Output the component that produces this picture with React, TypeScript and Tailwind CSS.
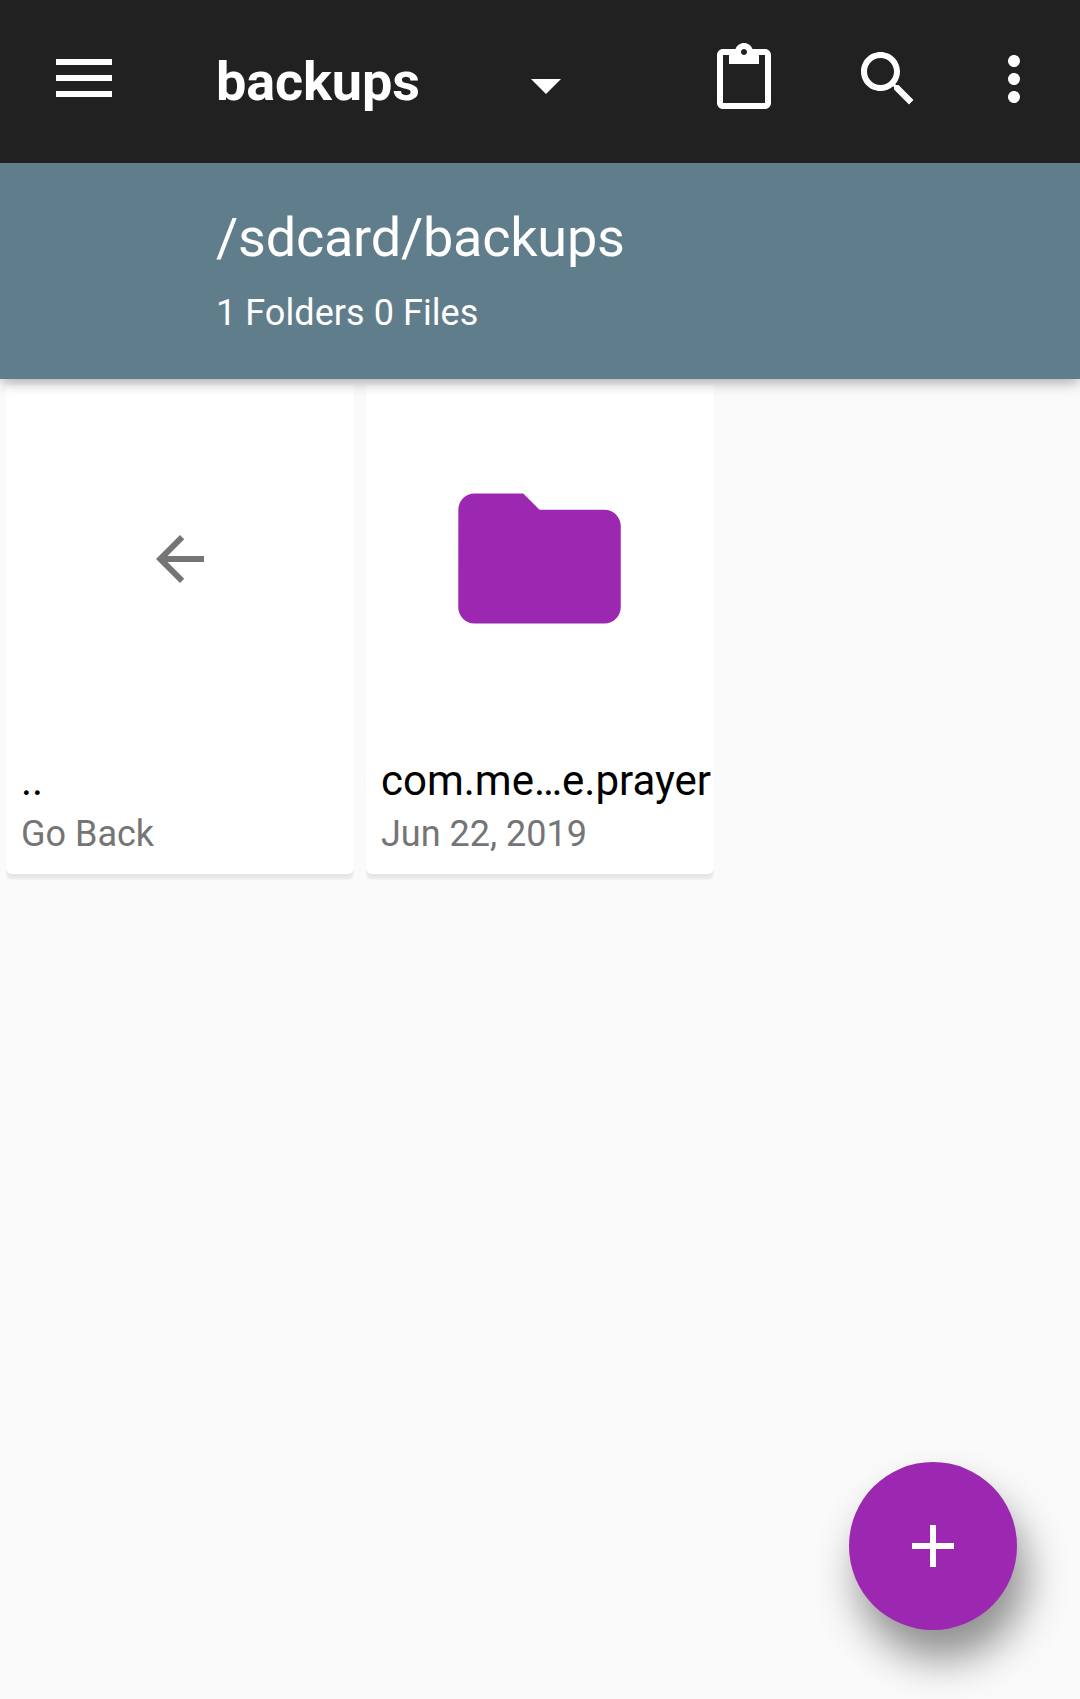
import React from "react";

type Entry = { name: string; detail: string; icon: React.ReactNode };

function Icon({ d, className }: { d: string; className: string }) {
  return (
    <svg viewBox="0 0 24 24" fill="currentColor" className={className} aria-hidden="true">
      <path d={d} />
    </svg>
  );
}

const paths = {
  menu: "M0 0h28v3H0zM0 8h28v3H0zM0 16h28v3H0z",
  clipboard:
    "M19 2h-4.18C14.4.84 13.3 0 12 0S9.6.84 9.18 2H5c-1.1 0-2 .9-2 2v16c0 1.1.9 2 2 2h14c1.1 0 2-.9 2-2V4c0-1.1-.9-2-2-2zm-7 0c.55 0 1 .45 1 1s-.45 1-1 1-1-.45-1-1 .45-1 1-1zm7 18H5V4h2v3h10V4h2v16z",
  search:
    "M15.5 14h-.79l-.28-.27C15.41 12.59 16 11.11 16 9.5 16 5.91 13.09 3 9.5 3S3 5.91 3 9.5 5.91 16 9.5 16c1.61 0 3.09-.59 4.23-1.57l.27.28v.79l5 4.99L20.49 19l-4.99-5zm-6 0C7.01 14 5 11.99 5 9.5S7.01 5 9.5 5 14 7.01 14 9.5 11.99 14 9.5 14z",
  more: "M12 8c1.1 0 2-.9 2-2s-.9-2-2-2-2 .9-2 2 .9 2 2 2zm0 2c-1.1 0-2 .9-2 2s.9 2 2 2 2-.9 2-2-.9-2-2-2zm0 6c-1.1 0-2 .9-2 2s.9 2 2 2 2-.9 2-2-.9-2-2-2z",
  back: "M20 11H7.83l5.59-5.59L12 4l-8 8 8 8 1.41-1.41L7.83 13H20v-2z",
  folder: "M10 4H4c-1.1 0-1.99.9-1.99 2L2 18c0 1.1.9 2 2 2h16c1.1 0 2-.9 2-2V8c0-1.1-.9-2-2-2h-8l-2-2z",
  plus: "M19 13h-6v6h-2v-6H5v-2h6V5h2v6h6v2z",
};

const entries: Entry[] = [
  { name: "..", detail: "Go Back", icon: <Icon d={paths.back} className="size-[72px] text-[#757575]" /> },
  {
    name: "com.me…e.prayer",
    detail: "Jun 22, 2019",
    icon: <Icon d={paths.folder} className="mr-px mb-px size-[195px] text-[#9c27b0]" />,
  },
];

function EntryCard({ name, detail, icon }: Entry) {
  return (
    <div className="w-[348px] overflow-hidden pb-2">
      <article className="flex h-[489px] flex-col rounded-b-[6px] bg-white shadow-[0_5px_3px_rgba(0,0,0,0.08)]">
        <div className="flex h-[348px] items-center justify-center">{icon}</div>
        <div className="pl-[15px] pt-[23px] whitespace-nowrap">
          <h2 className="text-[42px] leading-[50px] text-black">{name}</h2>
          <p className="mt-[7px] text-[36px] leading-[42px] text-[#757575]">{detail}</p>
        </div>
      </article>
    </div>
  );
}

export default function App() {
  return (
    <div className="flex h-[1699px] w-[1080px] flex-col overflow-hidden bg-[#fafafa] font-['Roboto',sans-serif]">
      <header className="relative z-10 shadow-[0_5px_12px_-1px_rgba(0,0,0,0.3)]">
        <div className="flex h-[163px] items-start bg-[#212121] text-white">
          <button aria-label="Menu" className="mt-[59px] ml-14">
            <svg viewBox="0 0 28 19" fill="currentColor" className="block h-[38px] w-14">
              <path d={paths.menu} />
            </svg>
          </button>
          <h1 className="mt-[50px] ml-[104px] w-[315px] text-[54px] leading-[64px] font-bold tracking-[-0.1px]">
            backups
          </h1>
          <svg viewBox="0 0 30 15" fill="currentColor" className="mt-[79px] h-[15px] w-[30px]">
            <path d="M0 0h30L15 15z" />
          </svg>
          <nav className="mt-[43px] ml-[147px] flex">
            <Icon d={paths.clipboard} className="size-[72px]" />
            <Icon d={paths.search} className="ml-[72px] size-[72px]" />
            <Icon d={paths.more} className="ml-[54px] size-[72px]" />
          </nav>
        </div>
        <div className="h-[216px] bg-[#607d8b] pt-[43px] pl-[216px] text-white">
          <p className="text-[54px] leading-[64px] tracking-[-0.23px]">/sdcard/backups</p>
          <p className="mt-[22px] text-[36px] leading-[42px] tracking-[0.06px]">1 Folders 0 Files</p>
        </div>
      </header>
      <main className="flex grow gap-3 pt-[6px] pl-[6px]">
        {entries.map((e) => (
          <EntryCard key={e.name} {...e} />
        ))}
      </main>
      <button
        aria-label="Add"
        className="mr-[63px] mb-[69px] flex size-[168px] shrink-0 items-center justify-center self-end rounded-full bg-[#9c27b0] text-white shadow-[9px_29px_42px_rgba(0,0,0,0.43)]"
      >
        <Icon d={paths.plus} className="size-[72px]" />
      </button>
    </div>
  );
}
